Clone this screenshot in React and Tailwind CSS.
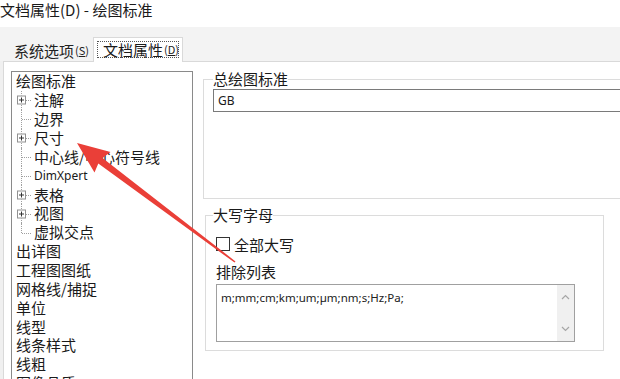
const cjk = "font-['Microsoft_YaHei','Noto_Sans_CJK_SC',sans-serif]"

const tree = [
  { label: '绘图标准', level: 0 },
  { label: '注解', level: 1, plus: true },
  { label: '边界', level: 1 },
  { label: '尺寸', level: 1, plus: true },
  { label: '中心线/中心符号线', level: 1 },
  { label: 'DimXpert', level: 1, small: true },
  { label: '表格', level: 1, plus: true },
  { label: '视图', level: 1, plus: true },
  { label: '虚拟交点', level: 1, last: true },
  { label: '出详图', level: 0 },
  { label: '工程图图纸', level: 0 },
  { label: '网格线/捕捉', level: 0 },
  { label: '单位', level: 0 },
  { label: '线型', level: 0 },
  { label: '线条样式', level: 0 },
  { label: '线粗', level: 0 },
  { label: '图像品质', level: 0 },
]

function PlusBox() {
  return (
    <span className="absolute left-[5px] top-1/2 -translate-y-1/2 w-[9px] h-[9px] bg-white border border-[#919191] flex items-center justify-center">
      <svg width="7" height="7" viewBox="0 0 7 7">
        <path d="M1 3.5H6M3.5 1V6" stroke="#333" strokeWidth="1" />
      </svg>
    </span>
  )
}

function TreeRow({ item }) {
  if (item.level === 0) {
    return <div className="h-[18.9px] leading-[18.9px] pl-[4px] whitespace-nowrap">{item.label}</div>
  }
  return (
    <div className="h-[18.9px] flex items-center whitespace-nowrap">
      <div className="relative w-[22px] self-stretch shrink-0">
        <span className={`absolute left-[9px] top-0 border-l border-dotted border-[#a0a0a0] ${item.last ? 'h-1/2' : 'h-full'}`} />
        <span className="absolute left-[10px] top-1/2 w-[9px] border-t border-dotted border-[#a0a0a0]" />
        {item.plus && <PlusBox />}
      </div>
      <span className={item.small ? "text-[12px] font-['Noto_Sans',sans-serif]" : ''}>{item.label}</span>
    </div>
  )
}

function Arrow() {
  return (
    <svg className="absolute inset-0 pointer-events-none" width="620" height="379" viewBox="0 0 620 379">
      <polygon
        points="77,143 110.5,152 102.5,158 235.5,261.4 234.5,262.6 98.3,163.6 94.5,172.5"
        fill="#ea3f38"
      />
    </svg>
  )
}

export default function App() {
  return (
    <div className={`relative w-[620px] h-[379px] overflow-hidden bg-[#f0f0f0] text-[#1a1a1a] ${cjk}`}>
      {/* title */}
      <div className="h-[27px] bg-white pt-[1px] text-[15px] leading-[17px] whitespace-nowrap">文档属性(D) - 绘图标准</div>

      {/* tabs */}
      <div className="h-[34px] flex items-end pl-[8px] bg-[#f3f3f3]">
        <div className="h-[21px] w-[85px] flex items-center pl-[6px] text-[15px] leading-none whitespace-nowrap text-[#222]">
          系统选项<span className="text-[11px] ml-[1px]">(<span className="underline">S</span>)</span>
        </div>
        <div className="relative z-10 -mb-px h-[25px] w-[90px] bg-white border border-b-0 border-[#d9d9d9] p-[3px] pb-[4px]">
          <div className="h-full border border-dotted border-[#555] flex items-center pl-[5px] text-[15px] leading-none whitespace-nowrap">
            文档属性<span className="text-[11px] ml-[1px]">(<span className="underline">D</span>)</span>
          </div>
        </div>
      </div>

      {/* panel */}
      <div className="ml-[3px] border-l border-t border-[#d9d9d9] bg-white flex h-[330px]">
        {/* tree */}
        <div className="ml-[7px] mt-[9px] w-[182px] shrink-0 border border-[#8a8a8a] bg-white text-[15px] h-[330px] overflow-hidden">
          {tree.map(item => <TreeRow key={item.label} item={item} />)}
        </div>

        {/* settings */}
        <div className="ml-[10px] pt-[8px] flex flex-col">
          <fieldset className="w-[440px] border border-[#dcdcdc] pl-[9px] pb-[86px]">
            <legend className="text-[15px] leading-[18px] px-0">总绘图标准</legend>
            <div className="mt-[1px] w-[420px] h-[23px] border border-[#7a7a7a] bg-white flex items-center pl-[4px] text-[12px] font-['Noto_Sans',sans-serif]">
              GB
            </div>
          </fieldset>

          <fieldset className="ml-[2px] mt-[7px] w-[399px] border border-[#dcdcdc] pl-[7px] pb-[8px]">
            <legend className="text-[15px] leading-[18px] px-0">大写字母</legend>
            <div className="mt-[12px] ml-[3px] flex items-center h-[16px] gap-[4px]">
              <span className="w-[14px] h-[14px] border border-[#333] bg-white" />
              <span className="text-[15px] leading-none">全部大写</span>
            </div>
            <div className="mt-[11px] ml-[3px] text-[15px] leading-[18px]">排除列表</div>
            <div className="mt-[3px] ml-[3px] w-[359px] h-[58px] border border-[#a0a0a0] flex">
              <div className="flex-1 pl-[4px] pt-[6px] text-[11.5px] leading-[14px] font-['Noto_Sans',sans-serif] text-[#222]">
                m;mm;cm;km;um;µm;nm;s;Hz;Pa;
              </div>
              <div className="w-[17px] bg-[#f0f0f0] flex flex-col items-center justify-between py-[9px]">
                <svg width="9" height="6" viewBox="0 0 9 6">
                  <path d="M1 5L4.5 1.5L8 5" stroke="#a6a6a6" strokeWidth="1.2" fill="none" />
                </svg>
                <svg width="9" height="6" viewBox="0 0 9 6">
                  <path d="M1 1L4.5 4.5L8 1" stroke="#a6a6a6" strokeWidth="1.2" fill="none" />
                </svg>
              </div>
            </div>
          </fieldset>
        </div>
      </div>

      <Arrow />
    </div>
  )
}
